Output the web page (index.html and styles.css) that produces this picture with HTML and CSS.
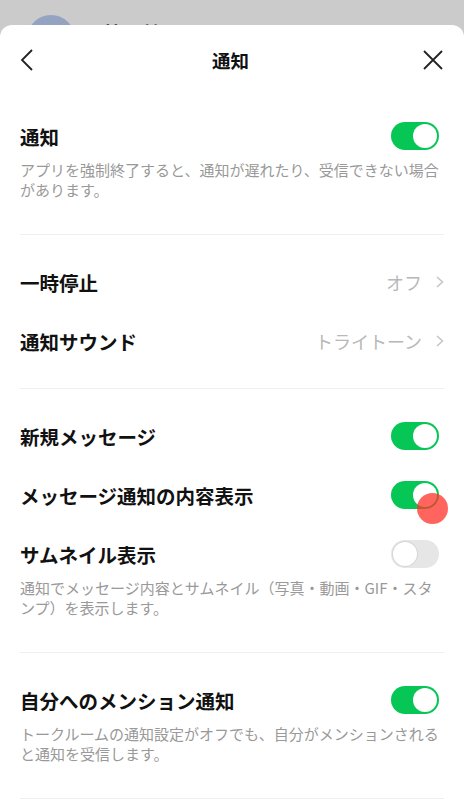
FILE: index.html
```html
<!DOCTYPE html>
<html lang="ja">
<head>
    <meta charset="UTF-8">
    <meta name="viewport" content="width=device-width, initial-scale=1.0">
    <title>通知</title>
    <link rel="stylesheet" href="styles.css">
</head>
<body>
    <div class="backdrop">
        <div class="peek">
            <span class="avatar"></span>
            <span class="peek-name">林田 健</span>
        </div>
    </div>

    <div class="sheet">
        <header class="sheet-head">
            <svg class="icon" width="22" height="22" viewBox="0 0 22 22">
                <path d="M15 1 L5 11 L15 21" fill="none" stroke="#222" stroke-width="1.8"/>
            </svg>
            <h1 class="title">通知</h1>
            <svg class="icon" width="22" height="22" viewBox="0 0 22 22">
                <path d="M2 2 L20 20 M20 2 L2 20" fill="none" stroke="#222" stroke-width="1.8"/>
            </svg>
        </header>

        <section class="group first">
            <div class="item">
                <div class="row">
                    <span class="label">通知</span>
                    <span class="switch on"></span>
                </div>
                <p class="note">アプリを強制終了すると、通知が遅れたり、受信できない場合があります。</p>
            </div>
        </section>

        <section class="group">
            <div class="row">
                <span class="label">一時停止</span>
                <span class="value">オフ<svg width="8" height="12" viewBox="0 0 8 12"><path d="M1 1 L6.5 6 L1 11" fill="none" stroke="#c4c4c4" stroke-width="1.5"/></svg></span>
            </div>
            <div class="row">
                <span class="label">通知サウンド</span>
                <span class="value">トライトーン<svg width="8" height="12" viewBox="0 0 8 12"><path d="M1 1 L6.5 6 L1 11" fill="none" stroke="#c4c4c4" stroke-width="1.5"/></svg></span>
            </div>
        </section>

        <section class="group">
            <div class="row">
                <span class="label">新規メッセージ</span>
                <span class="switch on"></span>
            </div>
            <div class="row">
                <span class="label">メッセージ通知の内容表示</span>
                <span class="switch on">
                    <span class="touch"></span>
                </span>
            </div>
            <div class="item">
                <div class="row">
                    <span class="label">サムネイル表示</span>
                    <span class="switch"></span>
                </div>
                <p class="note">通知でメッセージ内容とサムネイル（写真・動画・GIF・スタンプ）を表示します。</p>
            </div>
        </section>

        <section class="group">
            <div class="item">
                <div class="row">
                    <span class="label">自分へのメンション通知</span>
                    <span class="switch on"></span>
                </div>
                <p class="note">トークルームの通知設定がオフでも、自分がメンションされると通知を受信します。</p>
            </div>
        </section>
    </div>
</body>
</html>
```

FILE: styles.css
```css
*{
    margin: 0;
    padding: 0;
    box-sizing: border-box;
}
body{
    width: 464px;
    height: 800px;
    overflow: hidden;
    background: #cbcbcb;
    font-family: "Noto Sans CJK JP", "Noto Sans", sans-serif;
    color: #111;
}

/* 後ろの画面が少しだけ見えている部分 */
.backdrop{
    height: 25px;
    overflow: hidden;
}
.peek{
    display: flex;
    align-items: flex-start;
    gap: 28px;
    padding: 15px 0 0 27px;
}
.avatar{
    width: 48px;
    height: 48px;
    border-radius: 50%;
    background: #93a3c1;
    flex-shrink: 0;
}
.peek-name{
    font-size: 18px;
    font-weight: bold;
    color: #4a4a4a;
    margin-top: 4px;
}

.sheet{
    background: #fff;
    border-radius: 12px 12px 0 0;
    height: 775px;
}
.sheet-head{
    height: 70px;
    display: flex;
    align-items: center;
    justify-content: space-between;
    padding: 0 20px 0 17px;
}
.sheet-head .icon{
    display: block;
}
.title{
    font-size: 18.5px;
    font-weight: bold;
    color: #111;
}

.group{
    margin: 0 20px;
    padding: 27px 0 27px;
    border-bottom: 1px solid #efefef;
    display: flex;
    flex-direction: column;
    gap: 19px;
}
.group.first{
    padding-top: 21px;
}
.row{
    height: 40px;
    display: flex;
    align-items: center;
    justify-content: space-between;
}
.label{
    font-size: 19.5px;
    font-weight: bold;
    color: #111;
}
.value{
    display: flex;
    align-items: center;
    gap: 14px;
    font-size: 18px;
    color: #b8b8b8;
}
.note{
    margin-top: 4px;
    margin-bottom: 7px;
    font-size: 15px;
    line-height: 20px;
    color: #999;
}

/* トグル */
.switch{
    position: relative;
    width: 48px;
    height: 28px;
    margin-right: 5px;
    border-radius: 14px;
    background: #e6e6e6;
    flex-shrink: 0;
}
.switch::after{
    content: "";
    position: absolute;
    top: 2px;
    left: 2px;
    width: 24px;
    height: 24px;
    border-radius: 50%;
    background: #fff;
    box-shadow: 0 0 0 1px #d6d6d6;
}
.switch.on{
    background: #06c755;
}
.switch.on::after{
    left: 22px;
    box-shadow: none;
}

/* タップ位置の表示 */
.touch{
    position: absolute;
    left: 26px;
    top: 12px;
    width: 31px;
    height: 31px;
    border-radius: 50%;
    background: rgba(255, 50, 40, 0.75);
    z-index: 2;
}
```
